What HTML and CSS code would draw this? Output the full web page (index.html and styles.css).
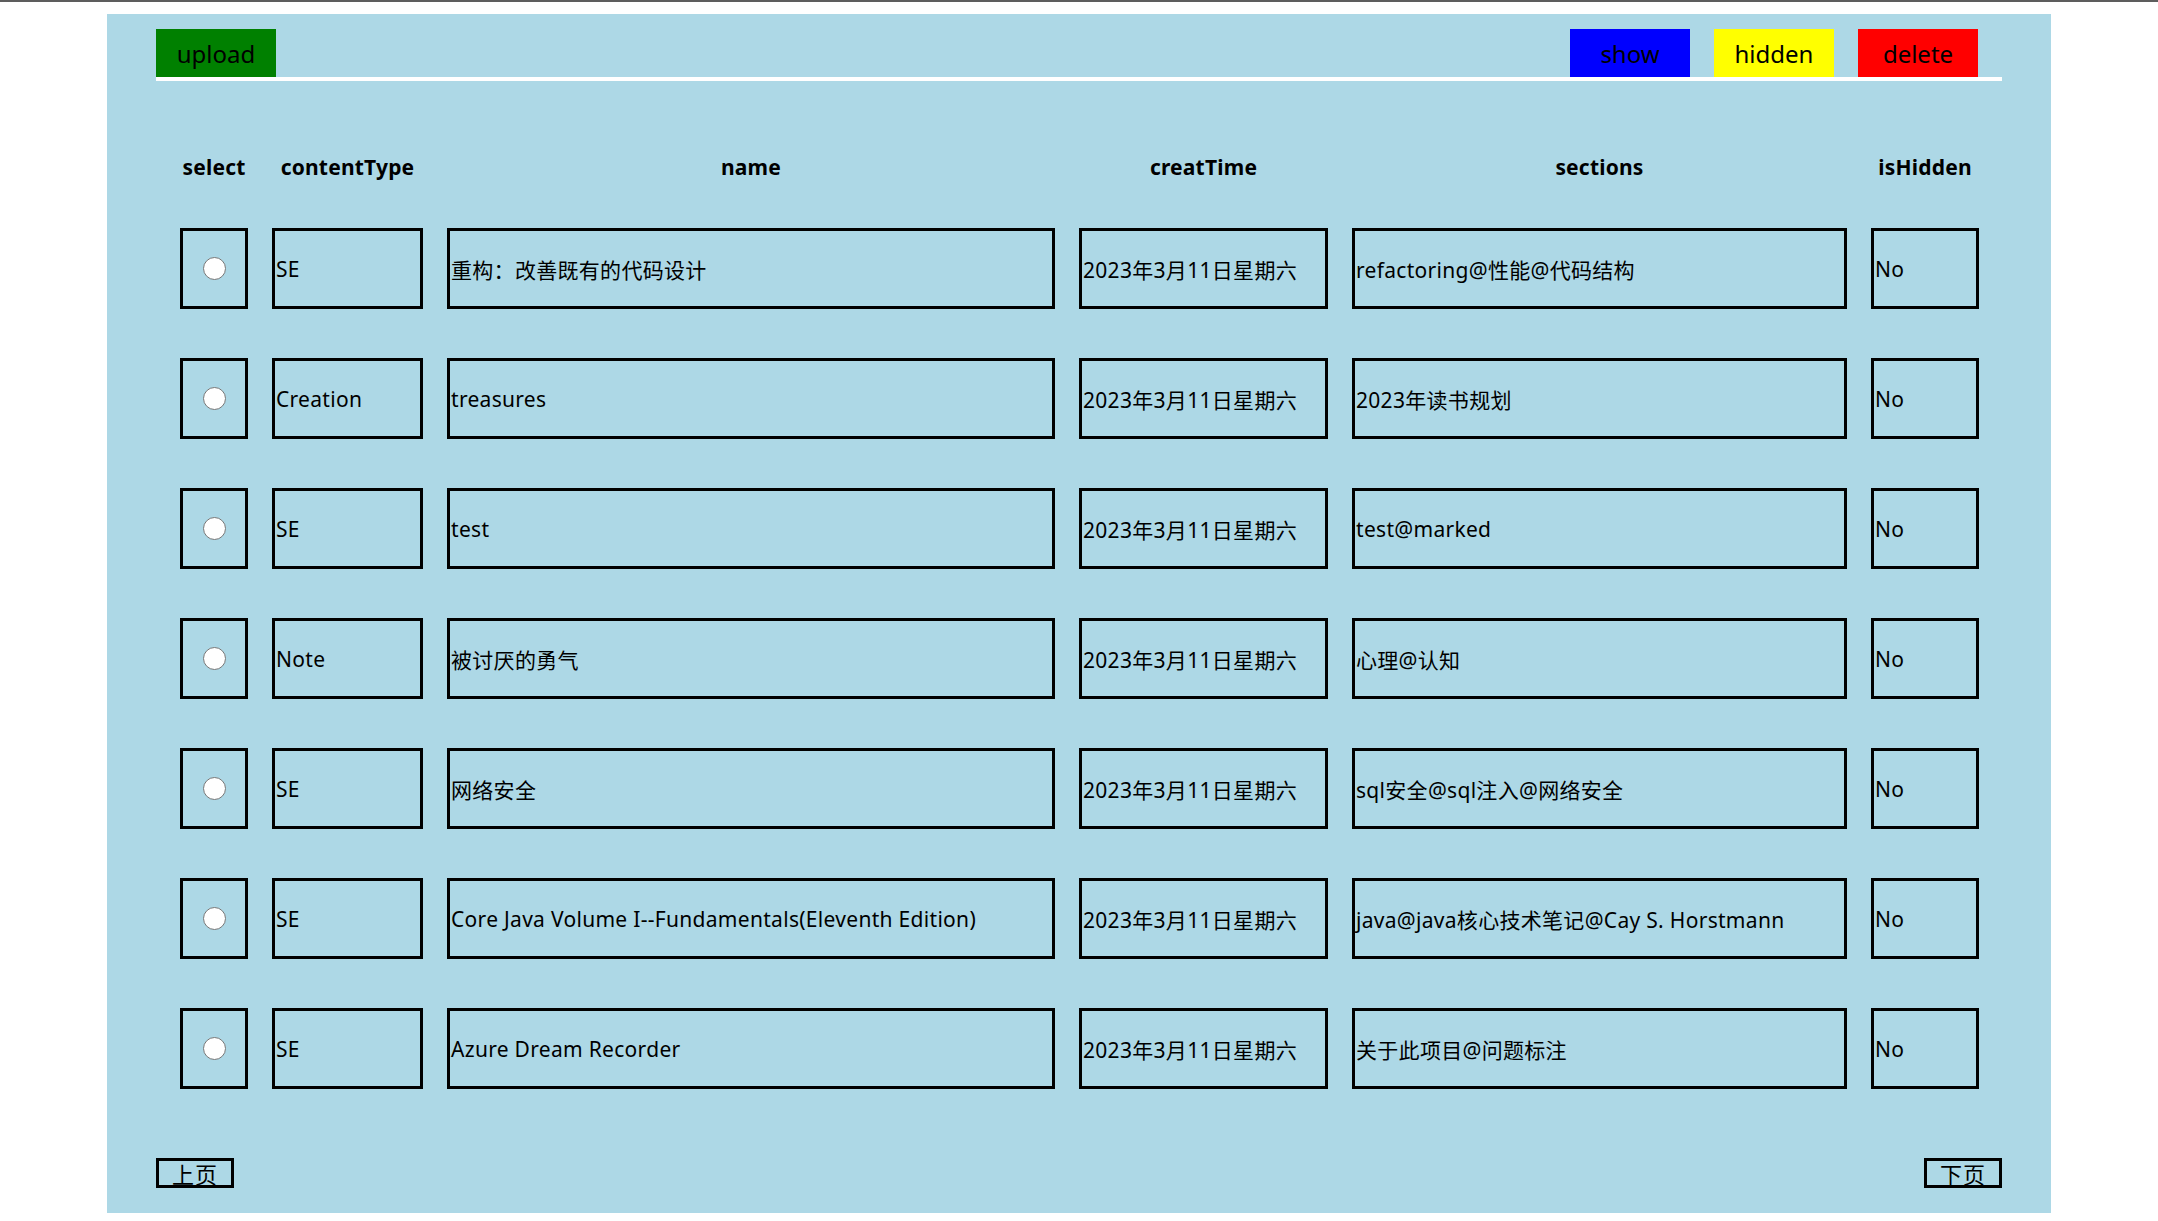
FILE: index.html
```html
<!DOCTYPE html>
<html lang="zh-CN">
<head>
<meta charset="utf-8">
<title>content manager</title>
<link rel="stylesheet" href="styles.css">
</head>
<body>
<div class="page">
  <div class="toolbar">
    <button class="btn btn-upload">upload</button>
    <div class="actions">
      <button class="btn btn-show">show</button>
      <button class="btn btn-hidden">hidden</button>
      <button class="btn btn-delete">delete</button>
    </div>
  </div>

  <div class="list">
    <div class="th">select</div>
    <div class="th">contentType</div>
    <div class="th">name</div>
    <div class="th">creatTime</div>
    <div class="th">sections</div>
    <div class="th">isHidden</div>

    <div class="td td-radio"><input type="radio" name="sel" class="radio"></div>
    <div class="td">SE</div>
    <div class="td">重构：改善既有的代码设计</div>
    <div class="td">2023年3月11日星期六</div>
    <div class="td">refactoring@性能@代码结构</div>
    <div class="td">No</div>

    <div class="td td-radio"><input type="radio" name="sel" class="radio"></div>
    <div class="td">Creation</div>
    <div class="td">treasures</div>
    <div class="td">2023年3月11日星期六</div>
    <div class="td">2023年读书规划</div>
    <div class="td">No</div>

    <div class="td td-radio"><input type="radio" name="sel" class="radio"></div>
    <div class="td">SE</div>
    <div class="td">test</div>
    <div class="td">2023年3月11日星期六</div>
    <div class="td">test@marked</div>
    <div class="td">No</div>

    <div class="td td-radio"><input type="radio" name="sel" class="radio"></div>
    <div class="td">Note</div>
    <div class="td">被讨厌的勇气</div>
    <div class="td">2023年3月11日星期六</div>
    <div class="td">心理@认知</div>
    <div class="td">No</div>

    <div class="td td-radio"><input type="radio" name="sel" class="radio"></div>
    <div class="td">SE</div>
    <div class="td">网络安全</div>
    <div class="td">2023年3月11日星期六</div>
    <div class="td">sql安全@sql注入@网络安全</div>
    <div class="td">No</div>

    <div class="td td-radio"><input type="radio" name="sel" class="radio"></div>
    <div class="td">SE</div>
    <div class="td">Core Java Volume I--Fundamentals(Eleventh Edition)</div>
    <div class="td">2023年3月11日星期六</div>
    <div class="td">java@java核心技术笔记@Cay S. Horstmann</div>
    <div class="td">No</div>

    <div class="td td-radio"><input type="radio" name="sel" class="radio"></div>
    <div class="td">SE</div>
    <div class="td">Azure Dream Recorder</div>
    <div class="td">2023年3月11日星期六</div>
    <div class="td">关于此项目@问题标注</div>
    <div class="td">No</div>
  </div>

  <div class="pager">
    <button class="page-btn">上页</button>
    <button class="page-btn">下页</button>
  </div>
</div>
</body>
</html>
```

FILE: styles.css
```css
html, body {
  margin: 0;
  padding: 0;
  background: #ffffff;
}

body {
  border-top: 2px solid #5d5d5d;
  font-family: "Noto Sans", "Noto Sans CJK SC", sans-serif;
  color: #000;
}

.page {
  width: 1944px;
  height: 1199px;
  box-sizing: border-box;
  margin: 12px auto 0;
  padding: 15px 49px 0;
  background: #add8e6;
}

.toolbar {
  display: flex;
  justify-content: space-between;
  align-items: flex-end;
  border-bottom: 4px solid #ffffff;
}

.actions {
  display: flex;
  gap: 24px;
  margin-right: 24px;
}

.btn {
  width: 120px;
  height: 48px;
  border: none;
  margin: 0;
  padding: 0;
  font-family: "Noto Sans", "Noto Sans CJK SC", sans-serif;
  font-size: 24px;
  color: #000;
  cursor: pointer;
}

.btn-upload { background: #008000; }
.btn-show { background: #0000ff; }
.btn-hidden { background: #ffff00; }
.btn-delete { background: #ff0000; }

.list {
  display: grid;
  grid-template-columns: 68px 151px 608px 249px 495px 108px;
  grid-auto-rows: 81px;
  grid-template-rows: 24px;
  column-gap: 24px;
  row-gap: 49px;
  padding: 0 24px;
  margin-top: 74px;
}

.th {
  font-weight: bold;
  font-size: 21px;
  letter-spacing: 0.2px;
  text-align: center;
  line-height: 24px;
  white-space: nowrap;
}

.td {
  box-sizing: border-box;
  border: 3px solid #000;
  display: flex;
  align-items: center;
  padding-left: 1px;
  font-size: 21px;
  letter-spacing: 0.3px;
  white-space: nowrap;
  overflow: hidden;
}

.td-radio {
  justify-content: center;
  padding-left: 0;
}

.radio {
  appearance: none;
  -webkit-appearance: none;
  width: 23px;
  height: 23px;
  margin: 0;
  border: 1.5px solid #767676;
  border-radius: 50%;
  background: #ffffff;
}

.pager {
  display: flex;
  justify-content: space-between;
  margin-top: 69px;
}

.page-btn {
  width: 78px;
  height: 30px;
  box-sizing: border-box;
  border: 3px solid #000;
  background: transparent;
  margin: 0;
  padding: 0;
  font-family: "Noto Sans CJK SC", sans-serif;
  font-size: 22px;
  line-height: 22px;
  color: #000;
  letter-spacing: 1px;
}
```
